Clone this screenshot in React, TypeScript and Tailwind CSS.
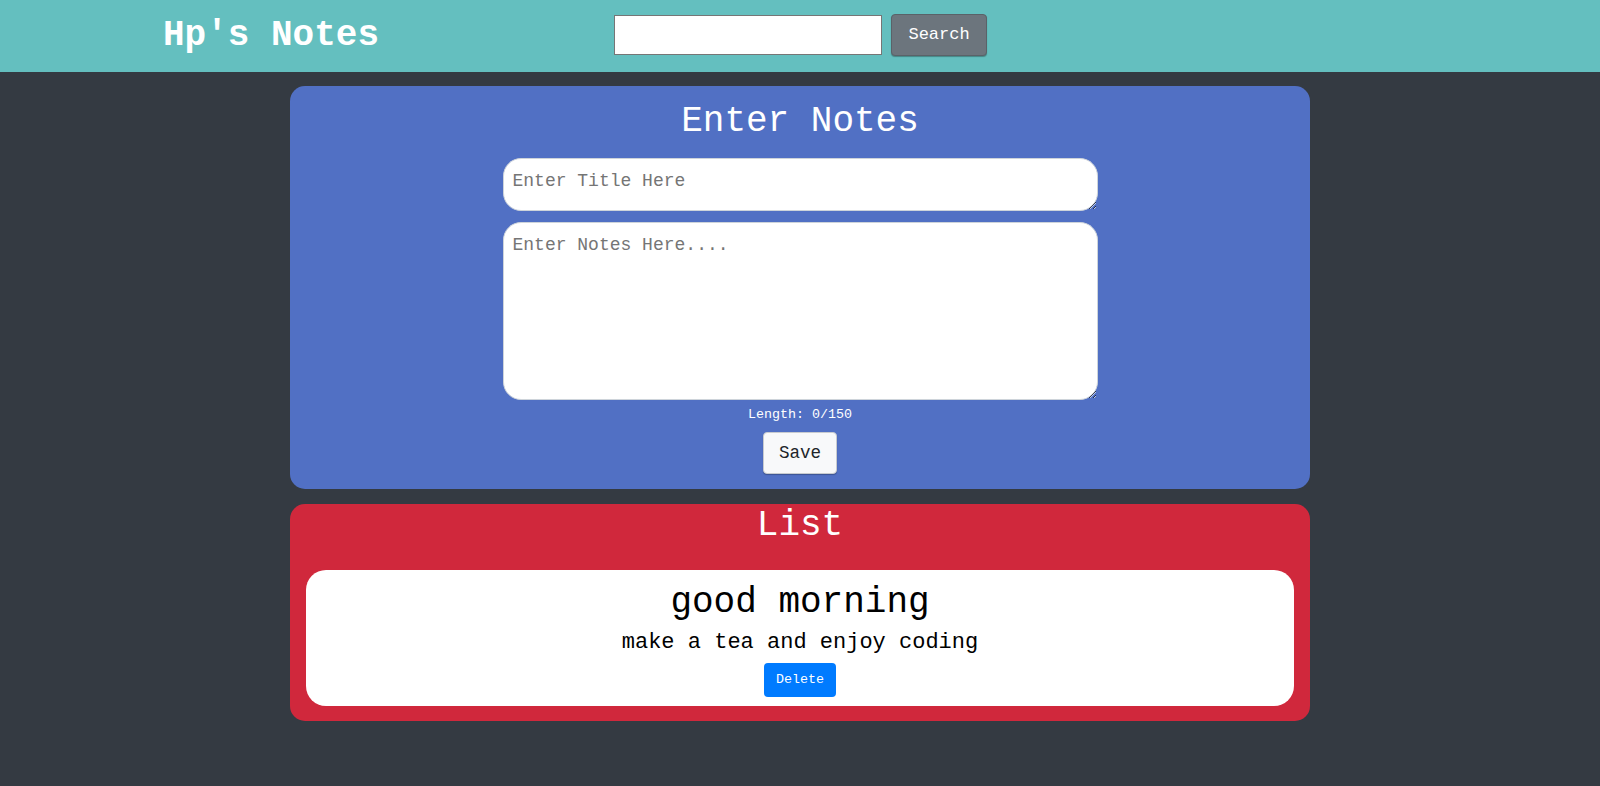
import React from 'react';

const font = "font-['Liberation_Mono','Courier_New',monospace]";

const Navbar = () => {
  return (
    <nav className="h-[72px] bg-[#64bfbf] flex items-center pl-[163px]">
      <span className="text-[36px] font-bold text-white leading-none whitespace-nowrap">Hp's Notes</span>
      <div className="ml-[235px] flex items-center gap-[9px] mt-[-3px]">
        <input type="text" className="w-[268px] h-[40px] bg-white border border-[#767676] outline-none" />
        <button className="w-[96px] h-[42px] bg-[#6c757d] text-white text-[17px] rounded-[4px] border border-[#5a6268] shadow-[0_1px_1px_rgba(0,0,0,0.3)]">
          Search
        </button>
      </div>
    </nav>
  );
};

const NoteForm = () => {
  return (
    <section className="rounded-[15px] bg-[#5170c4] pt-[14px] pb-[15px] flex flex-col items-center">
      <h2 className="text-[36px] leading-[1.2] text-white">Enter Notes</h2>
      <textarea
        rows={1}
        placeholder="Enter Title Here"
        className="mt-[15px] w-[595px] h-[53px] rounded-[18px] bg-white border border-[#ced4da] px-[9px] py-[9px] text-[18px] leading-[27px] text-[#212529] placeholder:text-[#757575] outline-none"
      />
      <textarea
        placeholder="Enter Notes Here...."
        className="mt-[11px] w-[595px] h-[178px] rounded-[18px] bg-white border border-[#ced4da] px-[9px] py-[9px] text-[18px] leading-[27px] text-[#212529] placeholder:text-[#757575] outline-none"
      />
      <small className="mt-[7px] text-[13.33px] leading-[16px] text-white">Length: 0/150</small>
      <button className="mt-[9px] w-[74px] h-[42px] bg-[#f8f9fa] border border-[#c8cbcf] rounded-[4px] text-[17.6px] text-[#212529] shadow-[0_1px_1px_rgba(0,0,0,0.25)]">
        Save
      </button>
    </section>
  );
};

const NoteList = () => {
  return (
    <section className="rounded-[15px] bg-[#d0283c] px-[16px] pb-[15px] flex flex-col">
      <h2 className="text-[36px] leading-[1.2] text-white text-center">List</h2>
      {/* note card */}
      <div className="mt-[23px] rounded-[20px] bg-white pt-[11px] pb-[9px] flex flex-col items-center text-black">
        <h3 className="text-[36px] leading-[1.2]">good morning</h3>
        <p className="mt-[5px] text-[22px] leading-[1.2]">make a tea and enjoy coding</p>
        <button className="mt-[7px] w-[72px] h-[34px] bg-[#007bff] text-white text-[13.33px] rounded-[4px]">Delete</button>
      </div>
    </section>
  );
};

export default function App() {
  return (
    <div className={`min-h-[786px] bg-[#343a42] ${font}`}>
      <Navbar />
      <main className="w-[1020px] mx-auto pt-[14px] flex flex-col gap-[15px]">
        <NoteForm />
        <NoteList />
      </main>
    </div>
  );
}
